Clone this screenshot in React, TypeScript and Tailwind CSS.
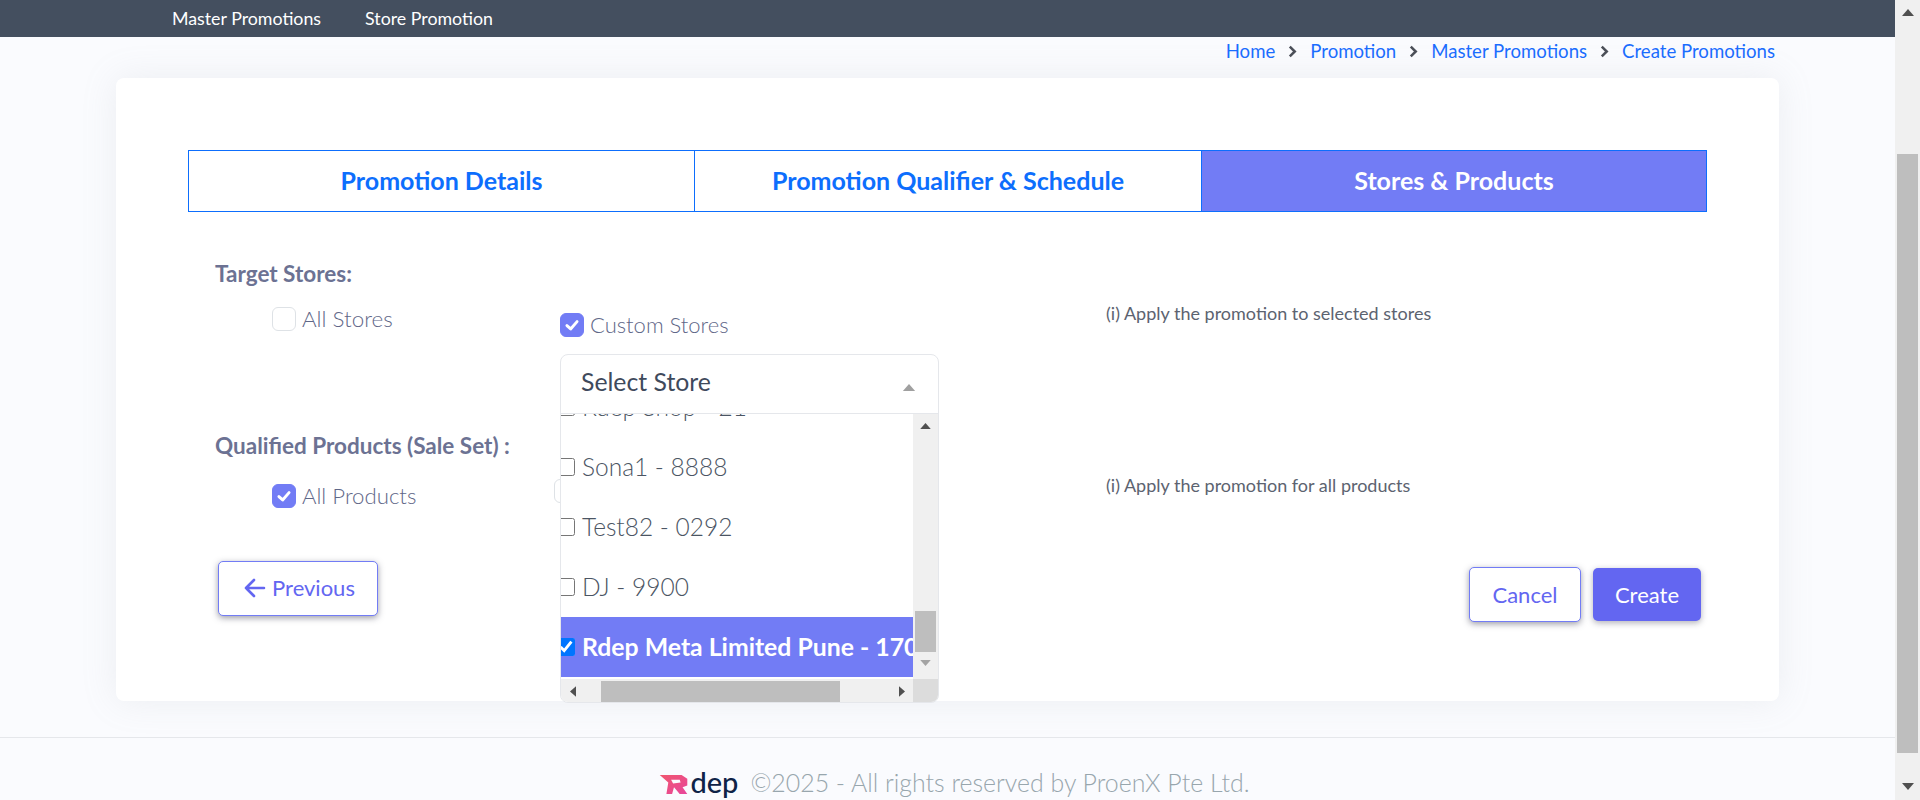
const F = "font-['Lato','Liberation_Sans',sans-serif]";

function Check({ checked }: { checked?: boolean }) {
  return (
    <span
      className={
        "flex h-6 w-6 shrink-0 items-center justify-center rounded-[6px] border " +
        (checked ? "border-[#727cf5] bg-[#727cf5]" : "border-[#dee2e6] bg-white")
      }
    >
      {checked && (
        <svg viewBox="0 0 16 16" className="h-[18px] w-[18px]" fill="none">
          <path d="M3.5 8.5 6.8 11.5 12.5 5" stroke="#fff" strokeWidth="2.6" strokeLinecap="round" strokeLinejoin="round" />
        </svg>
      )}
    </span>
  );
}

function Tri({ dir, cls }: { dir: "up" | "down" | "left" | "right"; cls: string }) {
  const pts = { up: "0,8 7,0 14,8", down: "0,0 14,0 7,8", left: "8,0 8,14 0,7", right: "0,0 0,14 8,7" }[dir];
  const vb = dir === "up" || dir === "down" ? "0 0 14 8" : "0 0 8 14";
  return (
    <svg viewBox={vb} className={cls}>
      <polygon points={pts} fill="currentColor" />
    </svg>
  );
}

function Item({ label, checked }: { label: string; checked?: boolean }) {
  return (
    <div
      className={
        "flex h-[60px] items-center whitespace-nowrap " +
        (checked ? "bg-[#727cf5] text-[24.8px] font-bold text-white" : "text-[24.5px] font-light text-[#4b5563]")
      }
    >
      <input type="checkbox" readOnly checked={!!checked} className="ml-[-4px] mr-[7px] h-[18px] w-[18px] shrink-0" />
      <span>{label}</span>
    </div>
  );
}

function Chevron() {
  return (
    <svg viewBox="0 0 10 14" className="mt-[6px] h-[13px] w-[9px]" fill="none" stroke="#4b4f58" strokeWidth="2.8">
      <path d="M2 1.5 7.5 7 2 12.5" />
    </svg>
  );
}

export default function App() {
  return (
    <div className={F + " flex h-screen w-full overflow-hidden bg-[#fafbfe]"}>
      <div className="flex min-w-0 flex-1 flex-col">
        <nav className="flex h-[37px] shrink-0 items-center gap-[44px] bg-[#444f5f] pl-[172px] text-[17.8px] text-white">
          <span>Master Promotions</span>
          <span>Store Promotion</span>
        </nav>

        <div className="flex h-[41px] shrink-0 items-start justify-end gap-[13px] pr-[120px] pt-[2px] text-[18.6px] leading-[24px] text-[#1a6dff]">
          <span>Home</span>
          <Chevron />
          <span>Promotion</span>
          <Chevron />
          <span>Master Promotions</span>
          <Chevron />
          <span>Create Promotions</span>
        </div>

        <main className="relative mx-[116px] h-[623px] shrink-0 rounded-[8px] bg-white px-[72px] pt-[72px] shadow-[0_0_35px_0_rgba(154,161,171,0.15)]">
          <div className="grid h-[62px] grid-cols-[505px_507px_1fr] border border-[#0d6efd] text-[25px] font-bold">
            <div className="flex items-center justify-center text-[#0d6efd]">Promotion Details</div>
            <div className="flex items-center justify-center border-l border-[#0d6efd] text-[#0d6efd]">
              Promotion Qualifier &amp; Schedule
            </div>
            <div className="flex items-center justify-center border-l border-[#0d6efd] bg-[#727cf5] text-white">
              Stores &amp; Products
            </div>
          </div>

          <div className="pl-[27px] pr-[6px]">
            <div className="mt-[48px] h-[27px] text-[22.5px] font-bold leading-[27px] text-[#6c7293]">Target Stores:</div>

            <div className="mt-[20px] flex h-[126px] items-start">
              <div className="flex w-[345px] items-center gap-[6px] pl-[57px] text-[22.4px] font-light leading-[24px] text-[#5f6788]">
                <Check />
                <span>All Stores</span>
              </div>
              <div className="relative w-[546px] pt-[6px]">
                <div className="flex items-center gap-[6px] text-[22px] font-light leading-[24px] text-[#5f6788]">
                  <Check checked />
                  <span>Custom Stores</span>
                </div>
                <div className="absolute left-[-6px] top-[172px] h-6 w-6 rounded-[6px] border border-[#dee2e6] bg-white" />
                <div className="absolute left-0 top-[47px] z-10 h-[349px] w-[379px] overflow-hidden rounded-[8px] border border-[#e5e7eb] bg-white">
                  <div className="flex h-[59px] items-center justify-between border-b border-[#e5e7eb] pb-[5px] pl-[20px] pr-[22px] text-[24.8px] text-[#3f4a5c]">
                    <span>Select Store</span>
                    <Tri dir="up" cls="mt-[11px] h-[7px] w-[14px] text-[#a0a0a0]" />
                  </div>
                  <div className="flex h-[265px]">
                    <div className="min-w-0 flex-1 overflow-hidden">
                      <div className="mt-[-37px] w-[600px]">
                        <Item label="Rdep Shop - 21" />
                        <Item label="Sona1 - 8888" />
                        <Item label="Test82 - 0292" />
                        <Item label="DJ - 9900" />
                        <Item label="Rdep Meta Limited Pune - 1701" checked />
                      </div>
                    </div>
                    <div className="flex w-[25px] shrink-0 flex-col items-center bg-[#f0f0f0]">
                      <Tri dir="up" cls="mt-[9px] h-[6px] w-[11px] text-[#505050]" />
                      <div className="mt-[182px] h-[41px] w-[21px] bg-[#bebebe]" />
                      <Tri dir="down" cls="mt-[8px] h-[6px] w-[11px] text-[#a3a3a3]" />
                    </div>
                  </div>
                  <div className="flex h-[25px]">
                    <div className="flex min-w-0 flex-1 items-center bg-[#f0f0f0]">
                      <Tri dir="left" cls="ml-[9px] h-[11px] w-[6px] text-[#505050]" />
                      <div className="ml-[25px] h-[21px] w-[239px] bg-[#bebebe]" />
                      <Tri dir="right" cls="ml-[59px] h-[11px] w-[6px] text-[#505050]" />
                    </div>
                    <div className="w-[25px] shrink-0 bg-[#dcdcdc]" />
                  </div>
                </div>
              </div>
              <div className="mt-[-6px] text-[18px] leading-[24px] text-[#5c6370]">
                (i) Apply the promotion to selected stores
              </div>
            </div>

            <div className="mt-[-1px] h-[27px] text-[22.5px] font-bold leading-[27px] text-[#6c7293]">
              Qualified Products (Sale Set) :
            </div>

            <div className="mt-[25px] flex items-start">
              <div className="flex w-[891px] items-center gap-[6px] pl-[57px] text-[22.2px] font-light leading-[24px] text-[#5f6788]">
                <Check checked />
                <span>All Products</span>
              </div>
              <div className="mt-[-11px] text-[18px] leading-[24px] text-[#5c6370]">
                (i) Apply the promotion for all products
              </div>
            </div>

            <div className="mt-[53px] flex items-start justify-between">
              <button className="ml-[3px] flex h-[55px] w-[160px] items-center justify-center gap-[5px] rounded-[5px] border border-[#727cf5] bg-white pb-[2px] pl-[2px] text-[22px] text-[#6366f1] shadow-[0_2px_6px_0_rgba(60,60,80,0.5)]">
                <svg viewBox="0 0 24 24" className="h-6 w-6" fill="none" stroke="#6366f1" strokeWidth="2.6" strokeLinecap="round" strokeLinejoin="round">
                  <path d="M21 12H3M11 4l-8 8 8 8" />
                </svg>
                Previous
              </button>
              <div className="mt-[6px] flex items-start gap-3">
                <button className="h-[55px] w-[112px] rounded-[5px] border border-[#727cf5] bg-white text-[22px] text-[#6366f1] shadow-[0_2px_6px_0_rgba(60,60,80,0.5)]">
                  Cancel
                </button>
                <button className="mt-px h-[53px] w-[108px] rounded-[5px] bg-[#6366f1] text-[22px] text-white shadow-[0_2px_6px_0_rgba(60,60,80,0.4)]">
                  Create
                </button>
              </div>
            </div>
          </div>
        </main>

        <footer className="mt-[36px] flex flex-1 items-start justify-center border-t border-[#e5e7eb] pl-[14px] pt-[28px]">
          <div className="flex items-center gap-[12px]">
            <div className="flex items-end">
              <svg viewBox="0 0 30 20" className="h-[19px] w-[30px]">
                <defs>
                  <linearGradient id="rdepPink" x1="0" y1="0" x2="1" y2="1">
                    <stop offset="0" stopColor="#f0566e" />
                    <stop offset="1" stopColor="#e8479c" />
                  </linearGradient>
                </defs>
                <polygon points="0,0 23,0 29,4 29,11 24,13 29,20 21,20 15,13 13,20 7,20 9,8" fill="url(#rdepPink)" />
                <polygon points="12,5 21,5 22,8 14,9" fill="#fafbfe" />
              </svg>
              <span className="ml-[1px] text-[29px] font-medium leading-[24px] text-[#0f2347]">dep</span>
            </div>
            <span className="text-[24.9px] font-light leading-[32px] text-[#98a6ad]">©2025 - All rights reserved by ProenX Pte Ltd.</span>
          </div>
        </footer>
      </div>

      <aside className="flex w-[25px] shrink-0 flex-col items-center bg-[#f0f0f0]">
        <Tri dir="up" cls="mt-[9px] h-[7px] w-[12px] text-[#505050]" />
        <div className="mt-[138px] h-[599px] w-[21px] bg-[#bebebe]" />
        <Tri dir="down" cls="mt-[30px] h-[7px] w-[12px] text-[#505050]" />
      </aside>
    </div>
  );
}
